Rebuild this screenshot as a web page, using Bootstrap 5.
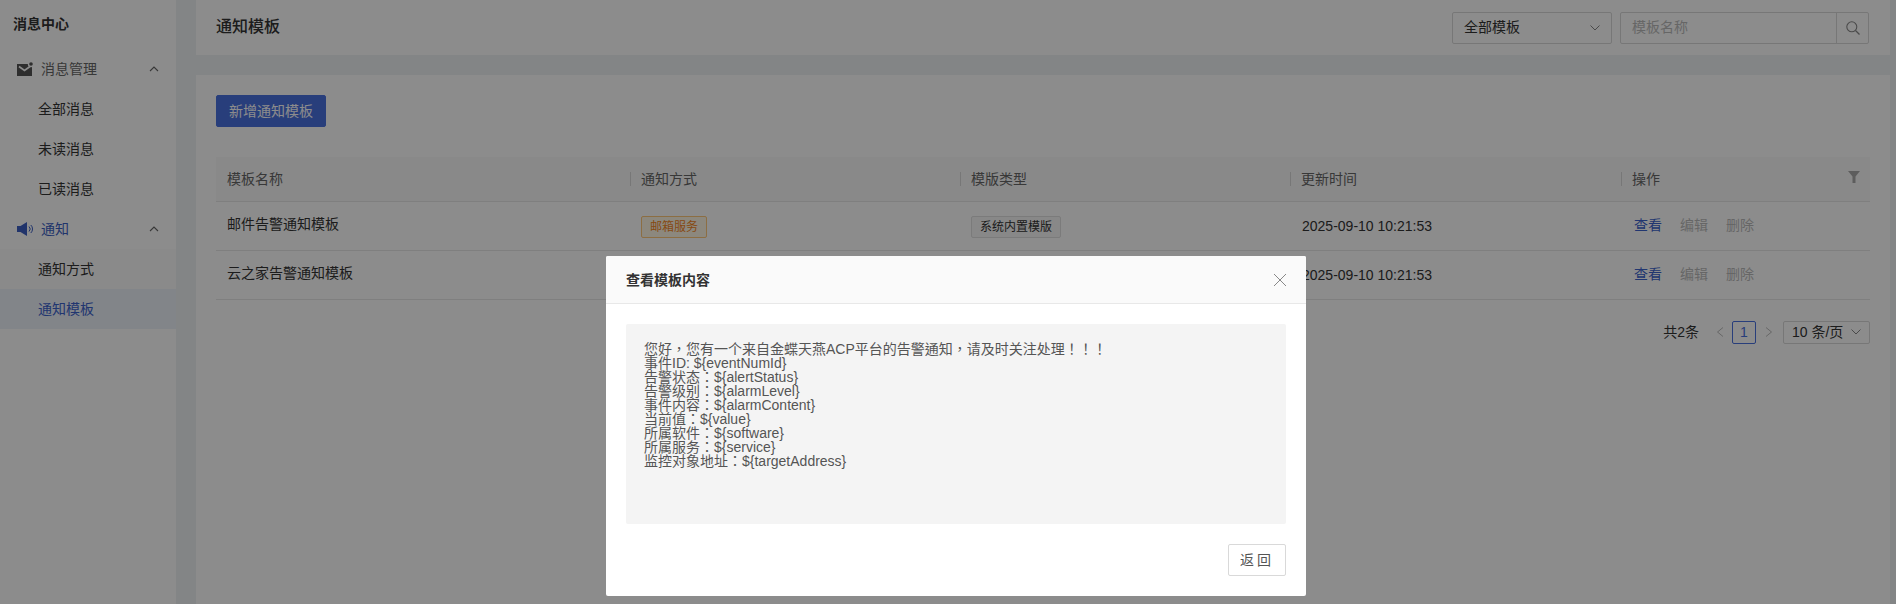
<!DOCTYPE html>
<html lang="zh-CN">

<head>
    <meta charset="UTF-8">
    <meta name="viewport" content="width=device-width, initial-scale=1.0">
    <title>通知模板</title>
    <link href="https://cdn.jsdelivr.net/npm/bootstrap@5.3.3/dist/css/bootstrap.min.css" rel="stylesheet">
    <style>
        html, body { height: 100%; overflow: hidden; }
        body {
            font-family: "Liberation Sans", "Noto Sans CJK SC", sans-serif;
            font-size: 14px;
            color: #333;
            background: #eef2f5;
        }
        .page-wrap { height: 604px; }

        /* sidebar */
        .side-panel { width: 176px; background: #fff; flex-shrink: 0; }
        .side-title { height: 48px; line-height: 48px; padding-left: 13px; font-weight: 700; color: #333; }
        .side-head { height: 40px; padding: 0 17px; margin-top: 1px; color: #666; }
        .side-head.is-on { color: #3c5fc4; }
        .side-head span { margin-left: 8px; flex-grow: 1; }
        .side-item { height: 40px; line-height: 40px; padding-left: 38px; color: #333; }
        .side-item.is-on { background: #edf2fa; color: #3c63cc; }
        .side-sub { background: #fcfcfc; }

        /* main */
        .main-col { margin-left: 20px; margin-right: 6px; min-width: 0; }
        .top-panel { height: 55px; background: #fff; padding: 0 21px 0 20px; margin-bottom: 20px; }
        .top-title { font-size: 16px; font-weight: 500; color: #333; margin-top: -2px; }
        .sel-box, .page-sel { border: 1px solid #d9d9d9; border-radius: 2px; background: #fff; color: #333; }
        .sel-box { width: 160px; height: 32px; padding: 0 11px; margin-right: 8px; }
        .search-box { width: 249px; height: 32px; border: 1px solid #d9d9d9; border-radius: 2px; }
        .search-text { color: #bbb; padding-left: 11px; }
        .search-btn { width: 32px; border-left: 1px solid #d9d9d9; }

        .body-panel { background: #fff; padding: 20px 20px 0 20px; height: 529px; }
        .btn-add {
            width: 110px; height: 32px; padding: 0; font-size: 14px;
            background: #4a71e0; border-color: #4a71e0; border-radius: 2px; color: #fff;
            margin-bottom: 30px; display: block;
        }
        .tpl-table { table-layout: fixed; width: 1654px; margin-bottom: 21px; color: #333; font-size: 14px; }
        .tpl-table th {
            height: 44px; padding: 2px 0 0 11px; background: #fafafa; font-weight: 400; color: #666;
            border-bottom: 1px solid #e8e8e8; position: relative; vertical-align: middle;
        }
        .tpl-table th + th::before {
            content: ""; position: absolute; left: 0; top: 15px; height: 14px; width: 1px; background: #d9d9d9;
        }
        .tpl-table td { height: 49px; padding: 0 0 0 11px; border-bottom: 1px solid #e8e8e8; vertical-align: middle; box-shadow: none; }
        .tpl-table td.cell-name { padding-bottom: 3px; }
        .tpl-table td.cell-time { padding-top: 2px; padding-left: 12px; }
        .funnel { position: absolute; right: 10px; top: 14px; }
        .tag-mail, .tag-sys {
            display: inline-block; height: 22px; line-height: 20px; padding: 0 8px; font-size: 12px;
            border-radius: 2px; margin-top: 2px;
        }
        .tag-mail { color: #f5871f; border: 1px solid #ffc97a; background: #fff7e6; }
        .tag-sys { color: #333; border: 1px solid #e0e0e0; background: #f7f7f7; }
        .act-on { color: #3c63cc; text-decoration: none; margin-left: 2px; margin-right: 18px; }
        .act-off { color: #bbb; margin-right: 18px; }

        .pager-row { height: 23px; }
        .pager-total { margin-right: 17px; }
        .pager-cur { width: 24px; height: 23px; line-height: 21px; border: 1px solid #4a71e0; border-radius: 2px; color: #4a71e0; text-align: center; margin: 0 9px 0 8px; }
        .page-sel { width: 87px; height: 23px; line-height: 21px; padding: 0 8px; margin-left: 10px; }

        /* dialog */
        .modal-backdrop { --bs-backdrop-opacity: .45; }
        .tpl-dialog { --bs-modal-width: 700px; margin: 256px 0 0 606px !important; }
        .tpl-content { border: 0; border-radius: 2px; height: 340px; }
        .tpl-head { height: 48px; padding: 0 20px; background: #fafafa; border-bottom: 1px solid #e8e8e8; border-radius: 2px 2px 0 0; }
        .tpl-head h5 { font-size: 14px; font-weight: 700; color: #333; margin: 1px 0 0; }
        .tpl-body { padding: 20px 20px 0; flex: none; }
        .msg-box {
            height: 200px; background: #f4f4f4; border-radius: 2px; padding: 18px 18px 0;
            font-family: "Liberation Sans", "Noto Sans CJK TC", sans-serif;
            line-height: 14px; font-size: 14px; color: #555; white-space: pre-line;
        }
        .tpl-foot { padding: 20px 20px 0; }
        .btn-back {
            width: 58px; height: 32px; padding: 0; font-size: 14px; letter-spacing: 3px;
            background: #fff; border: 1px solid #d9d9d9; border-radius: 2px; color: #555;
        }
    </style>
</head>

<body>

    <div class="d-flex page-wrap">
        <!-- left menu -->
        <div class="side-panel">
            <div class="side-title">消息中心</div>
            <div class="side-head d-flex align-items-center">
                <svg width="16" height="14" viewBox="0 0 16 14"><rect y="2" width="15" height="12" fill="#555"/><path d="M2 4.500l5.500 4 5.500-4" fill="none" stroke="#fff" stroke-width="1.600"/><circle cx="14" cy="2" r="3.200" fill="#fff"/><circle cx="14" cy="2" r="1.800" fill="#555"/></svg>
                <span>消息管理</span>
                <svg width="10" height="6" viewBox="0 0 10 6"><path d="M1 5l4-4 4 4" fill="none" stroke="#666" stroke-width="1.100"/></svg>
            </div>
            <div class="side-item">全部消息</div>
            <div class="side-item">未读消息</div>
            <div class="side-item">已读消息</div>
            <div class="side-head is-on d-flex align-items-center" style="margin-top:0">
                <svg width="16" height="14" viewBox="0 0 16 14"><path d="M0 4h3.500L10 0v14l-6.500-4H0z" fill="#3c5fc4"/><path d="M12 4.500a3.500 3.500 0 0 1 0 5M13.800 3a5.500 5.500 0 0 1 0 8" fill="none" stroke="#3c5fc4" stroke-width="1"/></svg>
                <span>通知</span>
                <svg width="10" height="6" viewBox="0 0 10 6"><path d="M1 5l4-4 4 4" fill="none" stroke="#666" stroke-width="1.100"/></svg>
            </div>
            <div class="side-sub">
                <div class="side-item">通知方式</div>
                <div class="side-item is-on">通知模板</div>
            </div>
        </div>

        <!-- right part -->
        <div class="main-col flex-grow-1">
            <div class="top-panel d-flex align-items-center">
                <div class="top-title flex-grow-1">通知模板</div>
                <div class="sel-box d-flex align-items-center justify-content-between">
                    全部模板
                    <svg width="10" height="6" viewBox="0 0 10 6"><path d="M.5.500L5 5 9.500.500" fill="none" stroke="#888" stroke-width="1"/></svg>
                </div>
                <div class="search-box d-flex">
                    <div class="search-text flex-grow-1 align-self-center">模板名称</div>
                    <div class="search-btn d-flex align-items-center justify-content-center">
                        <svg width="14" height="14" viewBox="0 0 14 14"><circle cx="5.800" cy="5.800" r="5" fill="none" stroke="#888" stroke-width="1.100"/><path d="M9.500 9.500L13.500 13.500" stroke="#888" stroke-width="1.200"/></svg>
                    </div>
                </div>
            </div>

            <div class="body-panel">
                <button class="btn btn-primary btn-add" type="button">新增通知模板</button>

                <table class="table tpl-table">
                    <colgroup>
                        <col style="width:414px">
                        <col style="width:330px">
                        <col style="width:330px">
                        <col style="width:331px">
                        <col style="width:249px">
                    </colgroup>
                    <thead>
                        <tr>
                            <th>模板名称</th>
                            <th>通知方式</th>
                            <th>模版类型</th>
                            <th>更新时间</th>
                            <th>操作
                                <svg class="funnel" width="12" height="12" viewBox="0 0 12 12"><path d="M0 0h12L7.500 5.500V12h-3V5.500z" fill="#aaa"/></svg>
                            </th>
                        </tr>
                    </thead>
                    <tbody>
                        <tr>
                            <td class="cell-name">邮件告警通知模板</td>
                            <td><span class="tag-mail">邮箱服务</span></td>
                            <td><span class="tag-sys">系统内置模版</span></td>
                            <td class="cell-time">2025-09-10 10:21:53</td>
                            <td><a class="act-on" href="#">查看</a><span class="act-off">编辑</span><span class="act-off">删除</span></td>
                        </tr>
                        <tr>
                            <td class="cell-name">云之家告警通知模板</td>
                            <td><span class="tag-mail">邮箱服务</span></td>
                            <td><span class="tag-sys">系统内置模版</span></td>
                            <td class="cell-time">2025-09-10 10:21:53</td>
                            <td><a class="act-on" href="#">查看</a><span class="act-off">编辑</span><span class="act-off">删除</span></td>
                        </tr>
                    </tbody>
                </table>

                <div class="pager-row d-flex align-items-center justify-content-end">
                    <span class="pager-total">共2条</span>
                    <svg width="8" height="10" viewBox="0 0 8 10"><path d="M7 .500L1.500 5 7 9.500" fill="none" stroke="#bbb" stroke-width="1"/></svg>
                    <div class="pager-cur">1</div>
                    <svg width="8" height="10" viewBox="0 0 8 10"><path d="M1 .500L6.500 5 1 9.500" fill="none" stroke="#bbb" stroke-width="1"/></svg>
                    <div class="page-sel d-flex align-items-center justify-content-between">
                        10 条/页
                        <svg width="10" height="6" viewBox="0 0 10 6"><path d="M.5.500L5 5 9.500.500" fill="none" stroke="#888" stroke-width="1"/></svg>
                    </div>
                </div>
            </div>
        </div>
    </div>

    <!-- view template dialog -->
    <div class="modal-backdrop show"></div>
    <div class="modal d-block" tabindex="-1">
        <div class="modal-dialog tpl-dialog">
            <div class="modal-content tpl-content">
                <div class="modal-header tpl-head">
                    <h5 class="modal-title">查看模板内容</h5>
                    <svg class="ms-auto" width="12" height="12" viewBox="0 0 12 12"><path d="M0 0l12 12M12 0L0 12" stroke="#888" stroke-width="1"/></svg>
                </div>
                <div class="modal-body tpl-body">
                    <div class="msg-box" lang="zh-Hant">您好，您有一个来自金蝶天燕ACP平台的告警通知，请及时关注处理！！！
事件ID: ${eventNumId}
告警状态：${alertStatus}
告警级别：${alarmLevel}
事件内容：${alarmContent}
当前值：${value}
所属软件：${software}
所属服务：${service}
监控对象地址：${targetAddress}</div>
                </div>
                <div class="tpl-foot d-flex justify-content-end">
                    <button class="btn btn-back" type="button">返回</button>
                </div>
            </div>
        </div>
    </div>

    <script src="https://cdn.jsdelivr.net/npm/bootstrap@5.3.3/dist/js/bootstrap.bundle.min.js"></script>

</body>

</html>
